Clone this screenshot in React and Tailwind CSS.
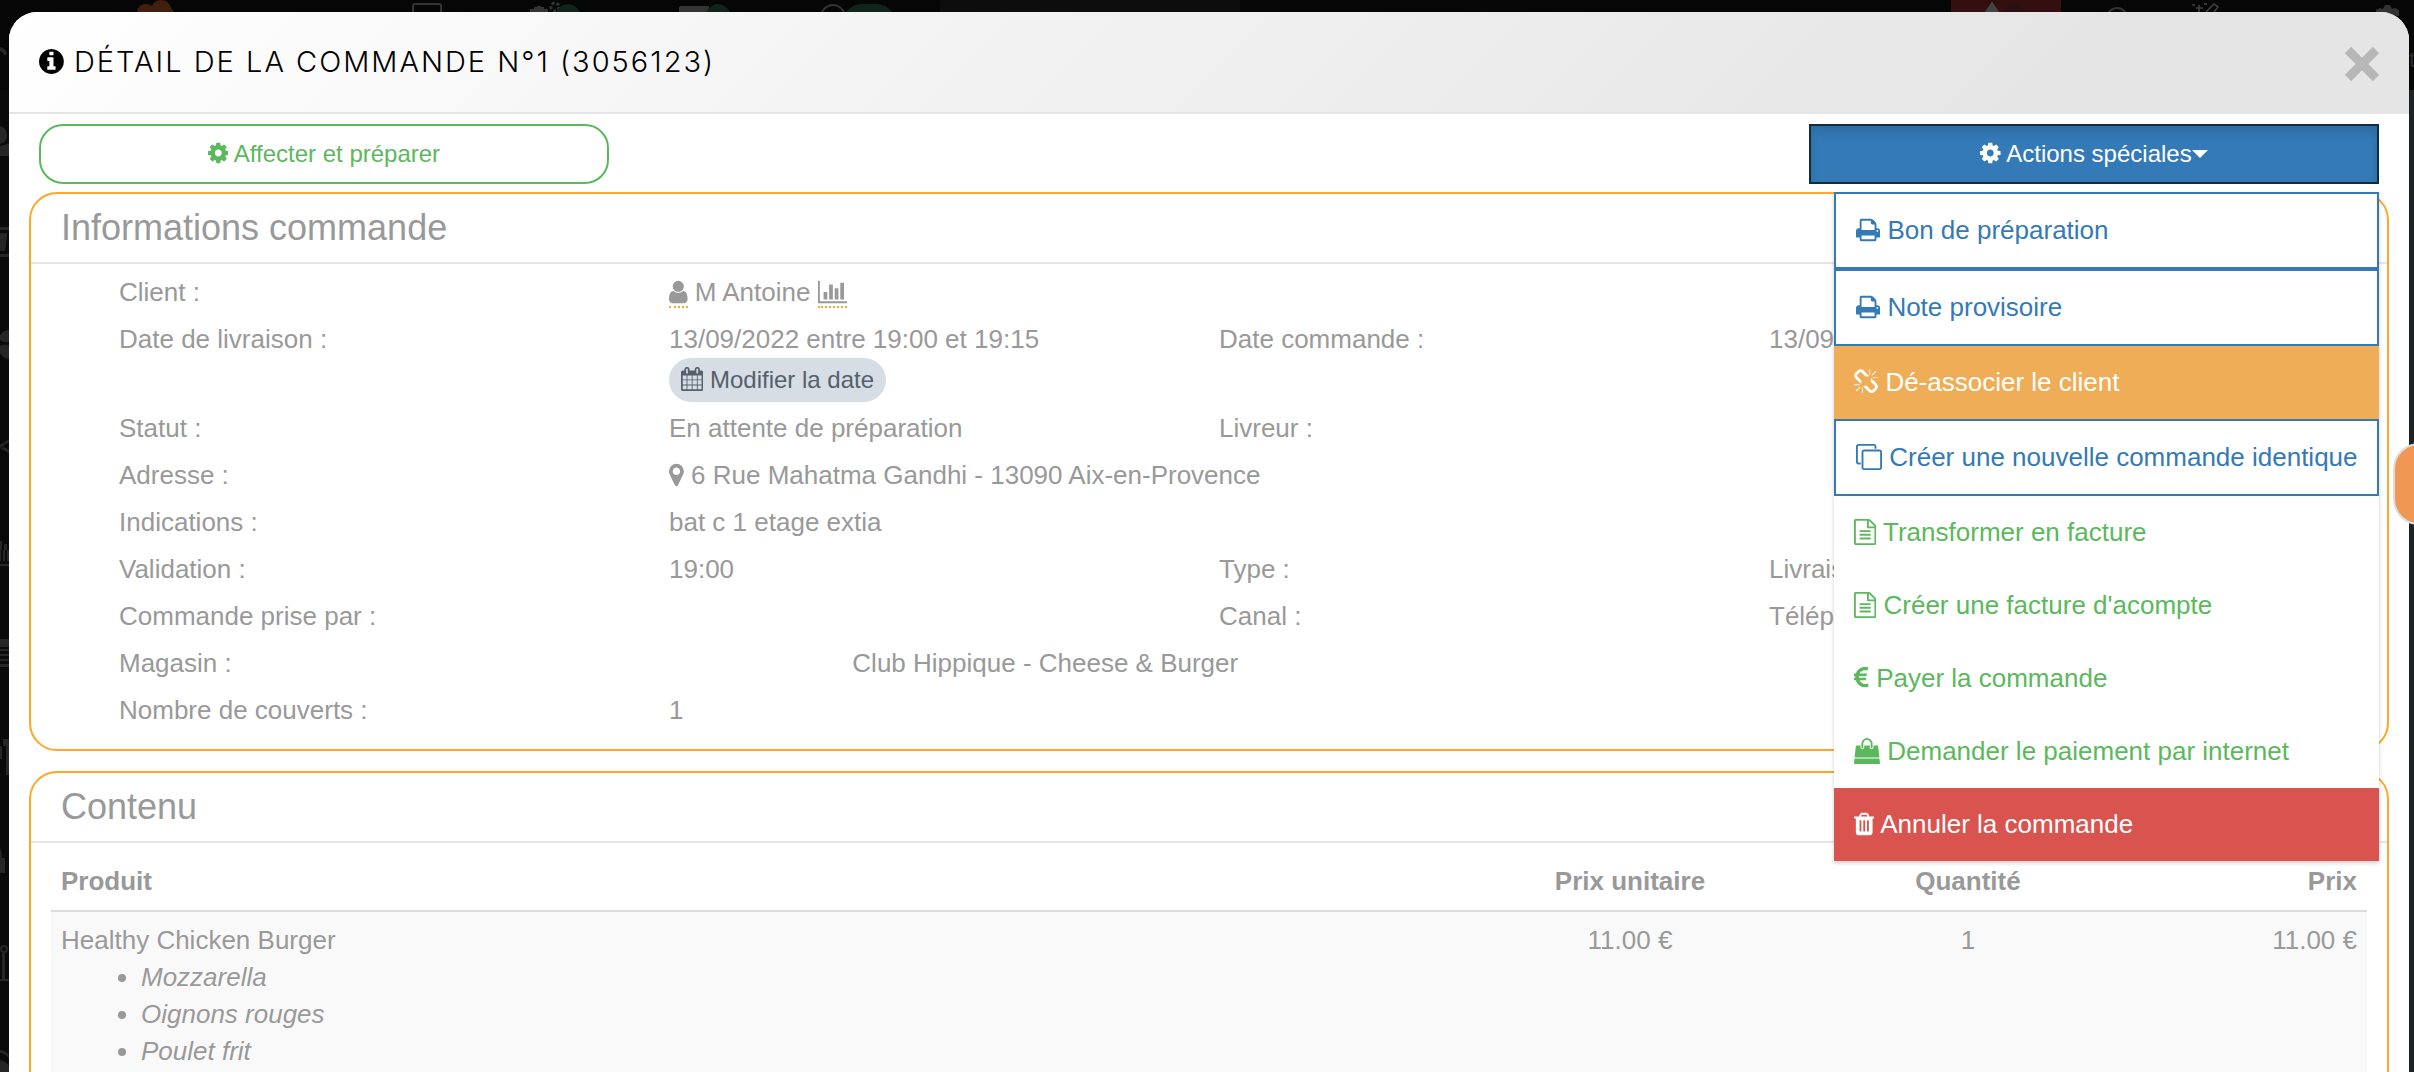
const ICONS = {
  cog: {
    x: 128,
    width: 1536,
    d: "M1152 896q0-106-75-181t-181-75-181 75-75 181 75 181 181 75 181-75 75-181zm512-109v222q0 12-8 23t-20 13l-185 28q-19 54-39 91 35 50 107 138 10 12 10 25t-9 23q-27 37-99 108t-94 71q-12 0-26-9l-138-108q-44 23-91 38-16 136-29 186-7 28-36 28h-222q-14 0-24.5-8.5t-11.5-21.5l-28-184q-49-16-90-37l-141 107q-10 9-25 9-14 0-25-11-126-114-165-168-7-10-7-23 0-12 8-23 15-21 51-66.5t54-70.5q-27-50-41-99l-183-27q-13-2-21-12.5t-8-23.5v-222q0-12 8-23t19-13l186-28q14-46 39-92-40-57-107-138-10-12-10-24 0-10 9-23 26-36 98.5-107.5t94.5-71.5q13 0 26 10l138 107q44-23 91-38 16-136 29-186 7-28 36-28h222q14 0 24.5 8.5t11.5 21.5l28 184q49 16 90 37l142-107q9-9 24-9 13 0 25 10 129 119 165 170 7 8 7 22 0 12-8 23-15 21-51 66.5t-54 70.5q26 50 41 98l183 28q13 2 21 12.5t8 23.5z",
  },
  print: {
    x: 64,
    width: 1664,
    d: "M448 1536h896v-256h-896v256zm0-640h896v-384h-160q-40 0-68-28t-28-68v-160h-640v640zm1152 64q0-26-19-45t-45-19-45 19-19 45 19 45 45 19 45-19 19-45zm128 0v416q0 13-9.5 22.5t-22.5 9.5h-224v160q0 40-28 68t-68 28h-960q-40 0-68-28t-28-68v-160h-224q-13 0-22.5-9.5t-9.5-22.5v-416q0-79 56.5-135.5t135.5-56.5h64v-544q0-40 28-68t68-28h672q40 0 88 20t76 48l152 152q28 28 48 76t20 88v256h64q79 0 135.5 56.5t56.5 135.5z",
  },
  user: {
    x: 256,
    width: 1280,
    d: "M1536 1399q0 109-62.5 187t-150.5 78h-854q-88 0-150.5-78t-62.5-187q0-85 8.5-160.5t31.5-152 58.5-131 94-89 134.5-34.5q131 128 313 128t313-128q76 0 134.5 34.5t94 89 58.5 131 31.5 152 8.5 160.5zm-256-887q0 159-112.5 271.5t-271.5 112.5-271.5-112.5-112.5-271.5 112.5-271.5 271.5-112.5 271.5 112.5 112.5 271.5z",
  },
  marker: {
    x: 384,
    width: 1024,
    d: "M1152 640q0-106-75-181t-181-75-181 75-75 181 75 181 181 75 181-75 75-181zm256 0q0 109-33 179l-364 774q-16 33-47.5 52t-67.5 19-67.5-19-46.5-52l-365-774q-33-70-33-179 0-212 150-362t362-150 362 150 150 362z",
  },
  chart: {
    x: 0,
    width: 2048,
    d: "M640 896v512h-256v-512h256zm384-512v1024h-256v-1024h256zm1024 1152v128h-2048v-1536h128v1408h1920zm-640-896v768h-256v-768h256zm384-384v1152h-256v-1152h256z",
  },
  info: {
    x: 128,
    width: 1536,
    d: "M1152 1376v-160q0-14-9-23t-23-9h-96v-512q0-14-9-23t-23-9h-320q-14 0-23 9t-9 23v160q0 14 9 23t23 9h96v320h-96q-14 0-23 9t-9 23v160q0 14 9 23t23 9h448q14 0 23-9t9-23zm-128-896v-160q0-14-9-23t-23-9h-192q-14 0-23 9t-9 23v160q0 14 9 23t23 9h192q14 0 23-9t9-23zm640 416q0 209-103 385.5t-279.5 279.5-385.5 103-385.5-103-279.5-279.5-103-385.5 103-385.5 279.5-279.5 385.5-103 385.5 103 279.5 279.5 103 385.5z",
  },
  calendar: {
    x: 64,
    width: 1664,
    d: "M192 1664h288v-288h-288v288zm352 0h320v-288h-320v288zm-352-352h288v-320h-288v320zm352 0h320v-320h-320v320zm-352-384h288v-288h-288v288zm736 736h320v-288h-320v288zm-384-736h320v-288h-320v288zm768 736h288v-288h-288v288zm-384-352h320v-320h-320v320zm-352-864v-288q0-13-9.5-22.5t-22.5-9.5h-64q-13 0-22.5 9.5t-9.5 22.5v288q0 13 9.5 22.5t22.5 9.5h64q13 0 22.5-9.5t9.5-22.5zm736 864h288v-320h-288v320zm-384-384h320v-288h-320v288zm384 0h288v-288h-288v288zm32-480v-288q0-13-9.5-22.5t-22.5-9.5h-64q-13 0-22.5 9.5t-9.5 22.5v288q0 13 9.5 22.5t22.5 9.5h64q13 0 22.5-9.5t9.5-22.5zm384-64v1280q0 52-38 90t-90 38h-1408q-52 0-90-38t-38-90v-1280q0-52 38-90t90-38h128v-96q0-66 47-113t113-47h64q66 0 113 47t47 113v96h384v-96q0-66 47-113t113-47h64q66 0 113 47t47 113v96h128q52 0 90 38t38 90z",
  },
  unlink: {
    x: 64,
    width: 1664,
    d: "M503 1271l-256 256q-10 9-23 9-12 0-23-9-9-10-9-23t9-23l256-256q10-9 23-9t23 9q9 10 9 23t-9 23zm169 41v320q0 14-9 23t-23 9-23-9-9-23v-320q0-14 9-23t23-9 23 9 9 23zm-224-224q0 14-9 23t-23 9h-320q-14 0-23-9t-9-23 9-23 23-9h320q14 0 23 9t9 23zm1264 128q0 120-85 203l-147 146q-83 83-203 83-121 0-204-85l-334-335q-21-21-42-56l239-18 273 274q28 28 68 28.5t68-27.5l147-146q28-28 28-67 0-40-28-68l-274-275 18-239q35 21 56 42l336 336q84 86 84 204zm-617-724l-239 18-273-274q-28-28-68-28-39 0-68 27l-147 146q-28 28-28 67 0 40 28 68l274 274-18 240q-35-21-56-42l-336-336q-84-86-84-204 0-120 85-203l147-146q83-83 203-83 121 0 204 85l334 335q21 21 42 56zm633 84q0 14-9 23t-23 9h-320q-14 0-23-9t-9-23 9-23 23-9h320q14 0 23 9t9 23zm-544-544v320q0 14-9 23t-23 9-23-9-9-23v-320q0-14 9-23t23-9 23 9 9 23zm407 151l-256 256q-11 9-23 9t-23-9q-9-10-9-23t9-23l256-256q10-9 23-9t23 9q9 10 9 23t-9 23z",
  },
  clone: {
    x: 0,
    width: 1792,
    d: "M1664 1632v-1088q0-13-9.5-22.5t-22.5-9.5h-1088q-13 0-22.5 9.5t-9.5 22.5v1088q0 13 9.5 22.5t22.5 9.5h1088q13 0 22.5-9.5t9.5-22.5zm128-1088v1088q0 66-47 113t-113 47h-1088q-66 0-113-47t-47-113v-1088q0-66 47-113t113-47h1088q66 0 113 47t47 113zm-384-384v160h-128v-160q0-13-9.5-22.5t-22.5-9.5h-1088q-13 0-22.5 9.5t-9.5 22.5v1088q0 13 9.5 22.5t22.5 9.5h160v128h-160q-66 0-113-47t-47-113v-1088q0-66 47-113t113-47h1088q66 0 113 47t47 113z",
  },
  file: {
    x: 128,
    width: 1536,
    d: "M1596 380q28 28 48 76t20 88v1152q0 40-28 68t-68 28h-1344q-40 0-68-28t-28-68v-1600q0-40 28-68t68-28h896q40 0 88 20t76 48zm-444-244v376h376q-10-29-22-41l-313-313q-12-12-41-22zm384 1528v-1024h-416q-40 0-68-28t-28-68v-416h-768v1536h1280zm-1024-864q0-14 9-23t23-9h704q14 0 23 9t9 23v64q0 14-9 23t-23 9h-704q-14 0-23-9t-9-23v-64zm736 224q14 0 23 9t9 23v64q0 14-9 23t-23 9h-704q-14 0-23-9t-9-23v-64q0-14 9-23t23-9h704zm0 256q14 0 23 9t9 23v64q0 14-9 23t-23 9h-704q-14 0-23-9t-9-23v-64q0-14 9-23t23-9h704z",
  },
  euro: {
    x: 389,
    width: 1027,
    d: "M1360 1307l35 159q3 12-3 22.5t-17 14.5l-5 1q-4 2-10.5 3.5t-16 4.5-21.5 5.5-25.5 5-30 5-33.5 4.5-36.5 3-38.5 1q-234 0-409-130.5t-238-351.5h-95q-13 0-22.5-9.5t-9.5-22.5v-113q0-13 9.5-22.5t22.5-9.5h66q-2-57 1-105h-67q-14 0-23-9t-9-23v-114q0-14 9-23t23-9h98q67-210 243.5-338t400.5-128q102 0 194 23 11 3 20 15 6 11 3 24l-43 159q-3 13-14 19.5t-24 2.5l-4-1q-4-1-11.5-2.5l-17.5-3.5-22.5-3.5-26-3-29-2.5-29.5-1q-126 0-226 64t-150 176h468q16 0 25 12 10 12 7 26l-24 114q-5 26-32 26h-488q-3 37 0 105h459q15 0 25 12 9 12 6 27l-24 112q-2 11-11 18.5t-20 7.5h-387q48 117 149.5 185.5t228.5 68.5q18 0 36-1.5t33.5-3.5 29.5-4.5 24.5-5 18.5-4.5l12-3 5-2q13-5 26 2 12 7 15 21z",
  },
  bag: {
    x: 0,
    width: 1792,
    d: "M1757 1408l35 313q3 28-16 50-19 21-48 21h-1664q-29 0-48-21-19-22-16-50l35-313h1722zm-93-839l86 775h-1708l86-775q3-24 21-40.5t43-16.5h256v128q0 53 37.5 90.5t90.5 37.5 90.5-37.5 37.5-90.5v-128h384v128q0 53 37.5 90.5t90.5 37.5 90.5-37.5 37.5-90.5v-128h256q25 0 43 16.5t21 40.5zm-384-185v256q0 26-19 45t-45 19-45-19-19-45v-256q0-106-75-181t-181-75-181 75-75 181v256q0 26-19 45t-45 19-45-19-19-45v-256q0-159 112.5-271.5t271.5-112.5 271.5 112.5 112.5 271.5z",
  },
  trash: {
    x: 192,
    width: 1408,
    d: "M704 1376v-704q0-14-9-23t-23-9h-64q-14 0-23 9t-9 23v704q0 14 9 23t23 9h64q14 0 23-9t9-23zm256 0v-704q0-14-9-23t-23-9h-64q-14 0-23 9t-9 23v704q0 14 9 23t23 9h64q14 0 23-9t9-23zm256 0v-704q0-14-9-23t-23-9h-64q-14 0-23 9t-9 23v704q0 14 9 23t23 9h64q14 0 23-9t9-23zm-544-992h448l-48-117q-7-9-17-11h-317q-10 2-17 11zm928 32v64q0 14-9 23t-23 9h-96v948q0 83-47 143.5t-113 60.5h-832q-66 0-113-58.5t-47-141.5v-952h-96q-14 0-23-9t-9-23v-64q0-14 9-23t23-9h309l70-167q15-37 54-63t79-26h320q40 0 79 26t54 63l70 167h309q14 0 23 9t9 23z",
  },
};

const outlined = "border-2 border-[#337ab7] bg-white text-[#337ab7]";
const plain = "bg-white text-[#5cb85c]";

const actions = [
  { label: "Bon de préparation", icon: "print", style: outlined },
  { label: "Note provisoire", icon: "print", style: outlined },
  { label: "Dé-associer le client", icon: "unlink", style: "bg-[#f0ad57] text-white" },
  { label: "Créer une nouvelle commande identique", icon: "clone", style: outlined },
  { label: "Transformer en facture", icon: "file", style: plain },
  { label: "Créer une facture d'acompte", icon: "file", style: plain },
  { label: "Payer la commande", icon: "euro", style: plain },
  { label: "Demander le paiement par internet", icon: "bag", style: plain },
  { label: "Annuler la commande", icon: "trash", style: "bg-[#d9534f] text-white" },
];

const products = [
  {
    name: "Healthy Chicken Burger",
    unitPrice: "11.00 €",
    quantity: 1,
    price: "11.00 €",
    options: ["Mozzarella", "Oignons rouges", "Poulet frit"],
  },
];

function Icon({ name }) {
  const icon = ICONS[name];
  return (
    <svg
      viewBox={`${icon.x} 0 ${icon.width} 1792`}
      className="inline-block h-[1em] w-auto align-[-0.143em]"
      fill="currentColor"
      aria-hidden="true"
    >
      <path d={icon.d} />
    </svg>
  );
}

// Dimmed application behind the dialog: only the edges of its toolbars show
function Backdrop() {
  return (
    <div className="absolute inset-0 bg-[#0a0a0a]" aria-hidden="true">
      <div className="h-[90px] bg-[#060606]" />
      <div className="absolute top-[90px] right-0 bottom-0 w-[5px] bg-[#1f2222]" />
      <svg className="absolute top-0 left-0" width="1300" height="12" fill="none">
        <rect x="940" width="300" height="12" fill="#0d0d0d" />
        <path d="M137 12q1-8 9-8 4 0 6 2 2-6 9-6 8 0 10 8l3 4z" fill="#40200c" />
        <path d="M413 12V6q0-2 2-2h24q2 0 2 2v6" stroke="#333" strokeWidth="2" />
        <path d="M530 12v-3h4v-2h3v-1h4v1h3v2h4v3z" fill="#333" />
        <circle cx="555" cy="7" r="4" stroke="#333" strokeWidth="3" strokeDasharray="3 2" />
        <path d="M556 12q5-8 12-8t12 8z" fill="#10241b" />
        <path d="M679 12V8q0-2 2-2h28v6z" fill="#333" />
        <path d="M706 12q5-8 12-8t12 8z" fill="#10241b" />
        <path d="M822 12q4-7 11-7t11 7" stroke="#333" strokeWidth="2" />
        <path d="M846 12q7-8 15-8h16q8 0 15 8z" fill="#10241b" />
      </svg>
      <svg className="absolute top-0 right-0" width="470" height="90" fill="none">
        <rect x="7" width="110" height="12" fill="#33100f" />
        <path d="M41 12 47 3q1-2 2 0l6 9z" fill="#444" />
        <circle cx="70" cy="14" r="10" fill="#2a1010" />
        <circle cx="173" cy="18" r="10" stroke="#333" strokeWidth="2" />
        <path d="M262 12 270 4l4 3-4 5M252 8h7M255 5v7M248 5h3M260 4h3" stroke="#444" strokeWidth="1.5" />
        <path d="M432 14v-4l4-2 3 1 2-4h5l2 4 3-1 4 2v6z" fill="#333" />
        <text x="465" y="67" fontSize="22" fill="#2c2c2c">
          t
        </text>
      </svg>
      <svg className="absolute top-0 left-0" width="9" height="1072" fill="#262626">
        <path d="M0 47q5 1 7 6l-2 3q-2-4-5-5zM0 126q7 2 7 9t-7 9zM0 146q5-1 9-3v13H0z" />
        <path d="M0 227h9v3H0zM0 233h7v3l-2 15H0zM0 254h9v3H0z" />
        <path d="M0 335q4-5 9-5v12q-6 1-9-2zM0 346q5-3 9 0v13q-5 0-9-6z" />
        <path d="M0 448l9-6v-3l-9 6zM0 448l9 5v-3l-5-3zM0 541h2v9H0zM4 544h3v6H4z" />
        <path d="M0 550h1v11H0zM3 550h2v11H3zM7 550h2v11H7zM0 564h9v2H0z" />
        <path d="M0 639h9v8H0zM0 649h9v2H0zM0 654h9v2H0zM0 659h9v2H0zM0 664h9v3H0z" />
        <path d="M3 739h6v36H6v-29H3zM0 746h2v13H0zM0 848q2 4 2 10h3v15H0z" />
        <path d="M2 952h3v28H2zM0 979h9v2H0zM0 1050q5 0 9 5v3q-5-5-9-5zM0 1060q7 2 9 6v6H0z" />
        <circle cx="4" cy="949" r="3" fill="none" stroke="#262626" strokeWidth="2" />
      </svg>
    </div>
  );
}

function Panel({ title, children }) {
  return (
    <section className="rounded-[28px] border-2 border-[#ffa726] bg-white">
      <h2 className="border-b-2 border-[#e5e5e5] px-[30px] pt-[14px] pb-[14px] text-[36px] leading-10">
        {title}
      </h2>
      {children}
    </section>
  );
}

function Row({ children }) {
  return <div className="grid min-h-[47px] grid-cols-12 py-1">{children}</div>;
}

function Label({ children }) {
  return <dt className="col-span-3">{children}</dt>;
}

function Value({ children }) {
  return <dd className="col-span-3 whitespace-nowrap">{children}</dd>;
}

function ActionsMenu() {
  return (
    <ul className="absolute top-full right-0 z-10 mt-2 w-[545px] bg-white shadow-[0_2px_4px_rgba(0,0,0,0.2)]">
      {actions.map((action) => (
        <li key={action.label}>
          <button
            className={`block w-full px-5 py-[18px] text-left text-[26px] leading-[37px] whitespace-nowrap ${action.style}`}
          >
            <Icon name={action.icon} /> {action.label}
          </button>
        </li>
      ))}
    </ul>
  );
}

export default function App() {
  return (
    <div className="relative h-screen overflow-hidden pt-3 pr-[5px] pl-[9px] font-['Liberation_Sans',Arial,sans-serif]">
      <Backdrop />

      <div
        role="dialog"
        aria-labelledby="order-title"
        className="relative min-h-screen rounded-t-[28px] bg-white"
      >
        <header className="flex h-[102px] items-center justify-between rounded-t-[28px] border-b-2 border-[#e5e5e5] bg-[linear-gradient(135deg,#fff_0%,#e5e5e5_85%)] px-[30px]">
          <h1
            id="order-title"
            className="font-['Inter','Liberation_Sans',sans-serif] text-[29px] leading-10 font-light tracking-[2px] text-black uppercase"
          >
            <Icon name="info" /> Détail de la commande n°1 (3056123)
          </h1>
          <button aria-label="Fermer" className="mt-1 text-[#b7b7b7]">
            <svg viewBox="0 0 34 34" className="size-[34px]" stroke="currentColor" strokeWidth="9" aria-hidden="true">
              <path d="M3 3 31 31M31 3 3 31" />
            </svg>
          </button>
        </header>

        <main className="px-5 pt-[10px] text-[26px] leading-[37px] text-[#999]">
          <div className="mb-2 grid grid-cols-4 gap-5 px-[10px] text-2xl">
            <button className="h-[60px] rounded-[24px] border-2 border-[#5cb85c] text-[#5cb85c]">
              <Icon name="cog" /> Affecter et préparer
            </button>
            <div className="relative col-start-4">
              <button
                aria-expanded="true"
                className="flex h-[60px] w-full items-center justify-center border-2 border-[#122b40] bg-[#337ab7] text-white shadow-[inset_0_6px_10px_rgba(0,0,0,0.125)]"
              >
                <span>
                  <Icon name="cog" /> Actions spéciales
                </span>
                <span className="border-x-8 border-t-8 border-x-transparent border-t-white" />
              </button>
              <ActionsMenu />
            </div>
          </div>

          <Panel title="Informations commande">
            <dl className="pt-1.5 pr-[68px] pb-[14px] pl-[88px]">
              <Row>
                <Label>Client :</Label>
                <Value>
                  <a href="#client" className="inline-block h-[34px] border-b-2 border-dotted border-[#ffa726]">
                    <Icon name="user" />
                  </a>{" "}
                  M Antoine{" "}
                  <a href="#stats" className="inline-block h-[34px] border-b-2 border-dotted border-[#ffa726]">
                    <Icon name="chart" />
                  </a>
                </Value>
              </Row>
              <Row>
                <Label>Date de livraison :</Label>
                <Value>
                  13/09/2022 entre 19:00 et 19:15
                  <button className="flex h-11 items-center rounded-full bg-[#d6dde4] px-3 text-2xl text-[#55606b]">
                    <span>
                      <Icon name="calendar" /> Modifier la date
                    </span>
                  </button>
                </Value>
                <Label>Date commande :</Label>
                <Value>13/09/2022</Value>
              </Row>
              <Row>
                <Label>Statut :</Label>
                <Value>En attente de préparation</Value>
                <Label>Livreur :</Label>
              </Row>
              <Row>
                <Label>Adresse :</Label>
                <Value>
                  <Icon name="marker" /> 6 Rue Mahatma Gandhi - 13090 Aix-en-Provence
                </Value>
              </Row>
              <Row>
                <Label>Indications :</Label>
                <Value>bat c 1 etage extia</Value>
              </Row>
              <Row>
                <Label>Validation :</Label>
                <Value>19:00</Value>
                <Label>Type :</Label>
                <Value>Livraison</Value>
              </Row>
              <Row>
                <Label>Commande prise par :</Label>
                <Value />
                <Label>Canal :</Label>
                <Value>Téléphone</Value>
              </Row>
              <Row>
                <dt className="col-span-4">Magasin :</dt>
                <dd className="col-span-8">Club Hippique - Cheese &amp; Burger</dd>
              </Row>
              <Row>
                <Label>Nombre de couverts :</Label>
                <Value>1</Value>
              </Row>
            </dl>
          </Panel>

          <div className="mt-5">
            <Panel title="Contenu">
              <div className="px-5 pt-[10px] pb-5">
                <table className="w-full table-fixed">
                  <thead>
                    <tr className="border-b-2 border-[#ddd]">
                      <th className="p-[10px] text-left">Produit</th>
                      <th className="w-[332px] p-[10px]">Prix unitaire</th>
                      <th className="w-[344px] p-[10px]">Quantité</th>
                      <th className="w-[227px] p-[10px] text-right">Prix</th>
                    </tr>
                  </thead>
                  <tbody>
                    {products.map((product) => (
                      <tr key={product.name} className="bg-[#f9f9f9] align-top">
                        <td className="p-[10px]">
                          {product.name}
                          <ul className="list-disc pl-20 italic">
                            {product.options.map((option) => (
                              <li key={option}>{option}</li>
                            ))}
                          </ul>
                        </td>
                        <td className="p-[10px] text-center">{product.unitPrice}</td>
                        <td className="p-[10px] text-center">{product.quantity}</td>
                        <td className="p-[10px] text-right">{product.price}</td>
                      </tr>
                    ))}
                  </tbody>
                </table>
              </div>
            </Panel>
          </div>
        </main>
      </div>

      <button
        aria-label="Aide"
        className="absolute top-[443px] -right-2.5 h-[82px] w-[31px] rounded-l-[26px] border-2 border-[#dedede] bg-[#f09853]"
      />
    </div>
  );
}
